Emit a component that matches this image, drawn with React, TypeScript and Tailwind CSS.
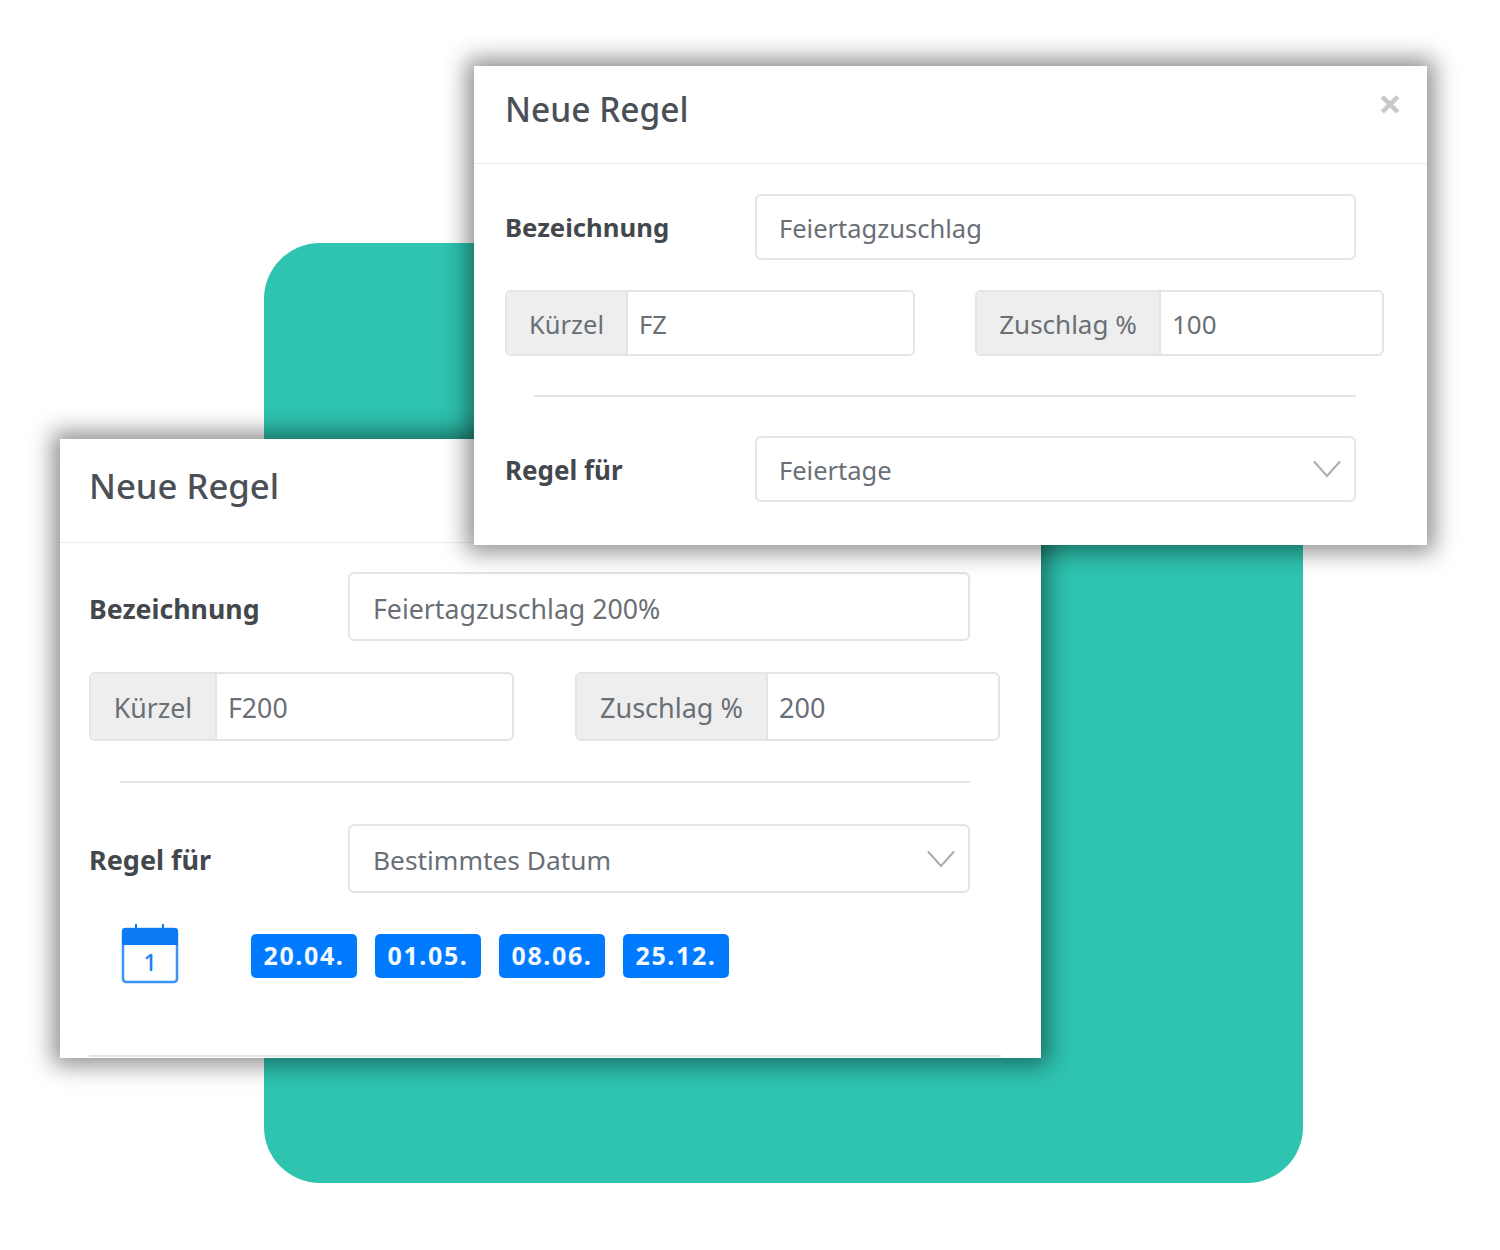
function Chevron({ className }: { className: string }) {
  return (
    <svg className={className} viewBox="0 0 30 18" fill="none" stroke="#a9adb1" strokeWidth="2">
      <path d="M2 1.5 L15 16 L28 1.5" />
    </svg>
  )
}

function CalendarIcon() {
  return (
    <svg className="h-[60px] w-[58px]" viewBox="0 0 58 60" fill="none">
      <rect x="2" y="5" width="54" height="53" rx="3" fill="#fff" stroke="#3a94f6" strokeWidth="2.5" />
      <path d="M1 7 a3 3 0 0 1 3 -3 h50 a3 3 0 0 1 3 3 v14 h-56 z" fill="#0a7bf2" />
      <rect x="14" y="0" width="2" height="6" fill="#0a7bf2" />
      <rect x="41" y="0" width="2" height="6" fill="#0a7bf2" />
      <text x="29" y="47" textAnchor="middle" fontSize="24" fontWeight="500" fontFamily="'Noto Sans', sans-serif" fill="#1a84f5">1</text>
    </svg>
  )
}

function Badge({ label }: { label: string }) {
  return (
    <span className="flex h-[44px] w-[106px] items-center justify-center rounded-[5px] bg-[#007bff] text-[25px] font-bold tracking-[1.6px] text-[#f4f9ff]">
      {label}
    </span>
  )
}

function FrontWindow() {
  return (
    <section className="absolute left-[474px] top-[66px] z-20 h-[479px] w-[953px] bg-white shadow-[0_0_22px_7px_rgba(0,0,0,0.45)]">
      <header className="relative flex h-[98px] items-center border-b border-[#e9ecef] pb-[10px] pl-[31px]">
        <h2 className="text-[33.5px] font-medium text-[#4a5056]">Neue Regel</h2>
        <span className="absolute right-[25px] top-[26px] text-[42px] leading-[22px] font-bold text-[#c9c9c9]">×</span>
      </header>
      <div className="pl-[31px] pt-[30px]">
        <div className="flex items-center">
          <label className="w-[250px] pt-[2px] text-[25.7px] font-bold text-[#43484d]">Bezeichnung</label>
          <div className="flex h-[66px] w-[601px] items-center rounded-[6px] border-2 border-[#e3e4e5] pl-[22px] pt-[2px] text-[25.5px] text-[#696f75]">
            Feiertagzuschlag
          </div>
        </div>
        <div className="mt-[30px] flex gap-[60px]">
          <div className="flex h-[66px] w-[410px] items-center rounded-[6px] border-2 border-[#e3e4e5] pt-[0px] text-[25.5px] text-[#696f75]">
            <span className="flex h-full w-[121px] items-center justify-center rounded-l-[5px] border-r-2 border-[#e3e4e5] bg-[#eeeeee] pt-[3px]">Kürzel</span>
            <span className="pl-[11px] pt-[3px]">FZ</span>
          </div>
          <div className="flex h-[66px] w-[409px] items-center rounded-[6px] border-2 border-[#e3e4e5] text-[26px] text-[#696f75]">
            <span className="flex h-full w-[184px] items-center justify-center rounded-l-[5px] border-r-2 border-[#e3e4e5] bg-[#eeeeee] pt-[3px]">Zuschlag %</span>
            <span className="pl-[11px] pt-[3px]">100</span>
          </div>
        </div>
        <hr className="ml-[29px] mt-[39px] w-[822px] border-t-2 border-[#e3e4e5]" />
        <div className="mt-[39px] flex items-center">
          <label className="w-[250px] pt-[2px] text-[26px] font-bold text-[#43484d]">Regel für</label>
          <div className="flex h-[66px] w-[601px] items-center justify-between rounded-[6px] border-2 border-[#e3e4e5] pl-[22px] pr-[12px] text-[25.5px] text-[#696f75]">
            <span className="pt-[2px]">Feiertage</span>
            <Chevron className="h-[18px] w-[30px]" />
          </div>
        </div>
      </div>
    </section>
  )
}

function BackWindow() {
  return (
    <section className="absolute left-[60px] top-[439px] z-10 h-[619px] w-[981px] bg-white shadow-[0_0_22px_7px_rgba(0,0,0,0.45)]">
      <header className="flex h-[104px] items-center border-b border-[#e9ecef] pb-[8px] pl-[29px]">
        <h2 className="text-[34.7px] font-medium text-[#4a5056]">Neue Regel</h2>
      </header>
      <div className="pl-[29px] pt-[29px]">
        <div className="flex items-center">
          <label className="w-[259px] pt-[6px] text-[26.7px] font-bold text-[#43484d]">Bezeichnung</label>
          <div className="flex h-[69px] w-[622px] items-center rounded-[6px] border-2 border-[#e3e4e5] pl-[23px] pt-[6px] text-[26.7px] text-[#696f75]">
            Feiertagzuschlag 200%
          </div>
        </div>
        <div className="mt-[31px] flex gap-[61px]">
          <div className="flex h-[69px] w-[425px] items-center rounded-[6px] border-2 border-[#e3e4e5] text-[26.7px] text-[#696f75]">
            <span className="flex h-full w-[126px] items-center justify-center rounded-l-[5px] border-r-2 border-[#e3e4e5] bg-[#eeeeee] pt-[4px]">Kürzel</span>
            <span className="pl-[11px] pt-[4px]">F200</span>
          </div>
          <div className="flex h-[69px] w-[425px] items-center rounded-[6px] border-2 border-[#e3e4e5] text-[27px] text-[#696f75]">
            <span className="flex h-full w-[191px] items-center justify-center rounded-l-[5px] border-r-2 border-[#e3e4e5] bg-[#eeeeee] pt-[4px]">Zuschlag %</span>
            <span className="pl-[11px] pt-[4px]">200</span>
          </div>
        </div>
        <hr className="ml-[31px] mt-[40px] w-[850px] border-t-2 border-[#e3e4e5]" />
        <div className="mt-[41px] flex items-center">
          <label className="w-[259px] pt-[4px] text-[27px] font-bold text-[#43484d]">Regel für</label>
          <div className="flex h-[69px] w-[622px] items-center justify-between rounded-[6px] border-2 border-[#e3e4e5] pl-[23px] pr-[12px] text-[26.3px] text-[#696f75]">
            <span className="pt-[4px]">Bestimmtes Datum</span>
            <Chevron className="h-[18px] w-[30px]" />
          </div>
        </div>
        <div className="mt-[31px] flex items-center pl-[32px]">
          <CalendarIcon />
          <div className="ml-[72px] mt-[4px] flex gap-[18px]">
            <Badge label="20.04." />
            <Badge label="01.05." />
            <Badge label="08.06." />
            <Badge label="25.12." />
          </div>
        </div>
        <hr className="mt-[71px] w-[912px] border-t-2 border-[#e3e4e5]" />
      </div>
    </section>
  )
}

export default function App() {
  return (
    <div className="relative h-[1250px] w-[1500px] overflow-hidden bg-white font-['Noto_Sans','Open_Sans',sans-serif]">
      {/* green backdrop */}
      <div className="absolute left-[264px] top-[243px] h-[940px] w-[1039px] rounded-[56px] bg-[#2ec4b0]" />
      <BackWindow />
      <FrontWindow />
    </div>
  )
}
